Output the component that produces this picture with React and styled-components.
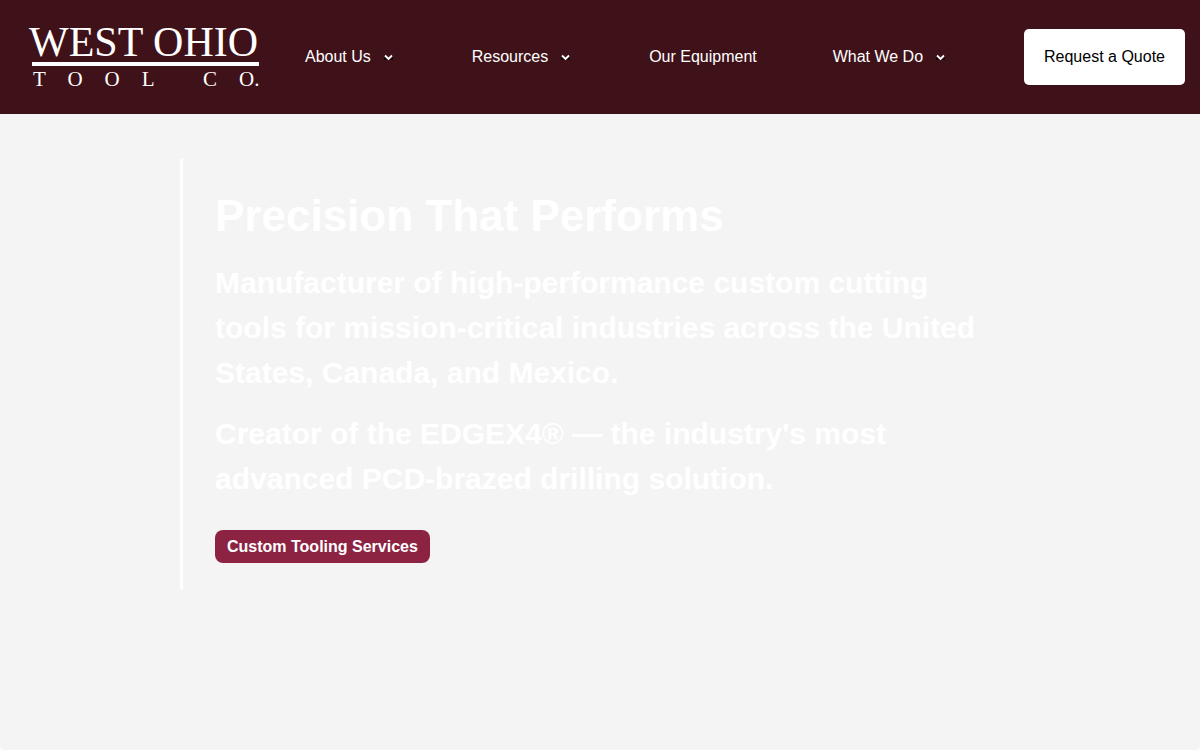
import React from 'react';
import styled, { createGlobalStyle } from 'styled-components';

const GlobalStyle = createGlobalStyle`
  *, *::before, *::after { box-sizing: border-box; }
  body {
    margin: 0;
    background: #ffffff;
    color: #ffffff;
    font: 16px/24px "Liberation Sans", Arial, sans-serif;
  }
`;

const Page = styled.div`
  min-height: 100vh;
  display: flex;
  flex-direction: column;
`;

const Header = styled.header`
  display: flex;
  align-items: center;
  gap: 40px;
  padding: 24px 15px 24px 29px;
  background: #3f121a;
`;

const Logo = styled.a`
  display: block;
  width: 236px;
  flex: none;
  color: #ffffff;
  text-decoration: none;
  white-space: nowrap;
  font-family: "Liberation Serif", "Times New Roman", serif;
`;

const LogoName = styled.span`
  display: block;
  font-size: 42px;
  line-height: 36px;
`;

const LogoRule = styled.span`
  display: block;
  height: 4px;
  margin: 2px 6px 2px 3px;
  background: #ffffff;
`;

const LogoSub = styled.span`
  display: block;
  padding-left: 4px;
  font-size: 21px;
  line-height: 22px;
`;

const Tracked = styled.span`
  letter-spacing: 22px;
`;

const Nav = styled.nav`
  flex: 1;
  display: flex;
  align-items: center;
  justify-content: space-between;
`;

const NavLink = styled.a`
  display: flex;
  align-items: center;
  gap: 11px;
  color: #ffffff;
  text-decoration: none;
  white-space: nowrap;
`;

const QuoteButton = styled.button`
  height: 56px;
  padding: 0 20px;
  border: 0;
  border-radius: 5px;
  background: #ffffff;
  color: #000000;
  font: inherit;
  white-space: nowrap;
`;

const Hero = styled.main`
  flex: 1;
  padding: 45px 15%;
  background: #f4f4f4;
  border-radius: 0 0 4px 4px;
`;

const HeroPanel = styled.section`
  padding: 24px 32px 26px;
  border-left: 3px solid #ffffff;
`;

const Title = styled.h1`
  margin: 0 0 11px;
  font-size: 44px;
  line-height: 66px;
`;

const Lead = styled.p`
  margin: 0 0 16px;
  font-size: 30px;
  font-weight: 700;
  line-height: 45px;
`;

const ServicesButton = styled.button`
  display: block;
  height: 33px;
  margin-top: 29px;
  padding: 0 12px;
  border: 0;
  border-radius: 8px;
  background: #8c2343;
  color: #ffffff;
  font: inherit;
  font-weight: 700;
`;

const Chevron = () => (
  <svg width="14" height="14" viewBox="0 0 14 14" fill="none" aria-hidden="true">
    <path d="M2 10V6L6.500 10.500L11 6V10Z" fill="#16070a" />
    <path d="M3 5.500L6.500 9L10 5.500" stroke="#ffffff" strokeWidth="1.900" />
  </svg>
);

const links = [
  { label: 'About Us', menu: true },
  { label: 'Resources', menu: true },
  { label: 'Our Equipment', menu: false },
  { label: 'What We Do', menu: true },
];

export default function App() {
  return (
    <Page>
      <GlobalStyle />
      <Header>
        <Logo href="#">
          <LogoName>WEST OHIO</LogoName>
          <LogoRule />
          <LogoSub><Tracked>TOOL C</Tracked>O.</LogoSub>
        </Logo>
        <Nav>
          {links.map(({ label, menu }) => (
            <NavLink href="#" key={label}>
              {label}
              {menu && <Chevron />}
            </NavLink>
          ))}
          <QuoteButton type="button">Request a Quote</QuoteButton>
        </Nav>
      </Header>
      <Hero>
        <HeroPanel>
          <Title>Precision That Performs</Title>
          <Lead>
            Manufacturer of high-performance custom cutting tools for mission-critical
            industries across the United States, Canada, and Mexico.
          </Lead>
          <Lead>
            Creator of the EDGEX4® — the industry's most advanced PCD-brazed drilling solution.
          </Lead>
          <ServicesButton type="button">Custom Tooling Services</ServicesButton>
        </HeroPanel>
      </Hero>
    </Page>
  );
}
